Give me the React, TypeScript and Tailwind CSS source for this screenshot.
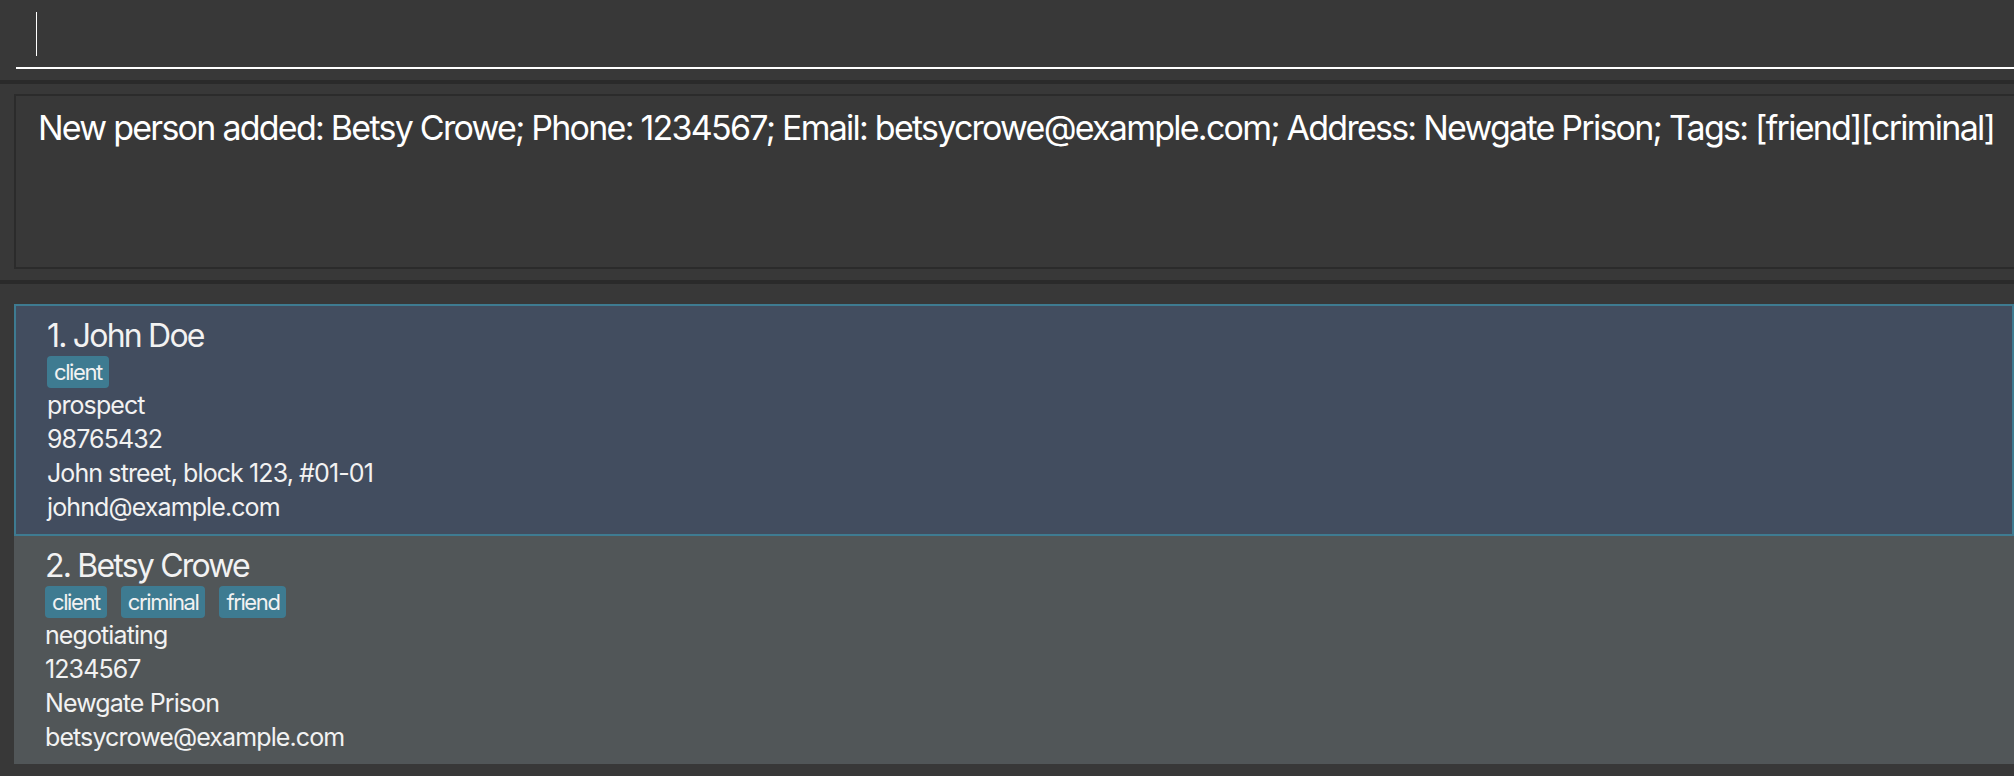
const people = [
  {
    name: "1. John Doe",
    tags: ["client"],
    status: "prospect",
    phone: "98765432",
    address: "John street, block 123, #01-01",
    email: "johnd@example.com",
    selected: true,
  },
  {
    name: "2. Betsy Crowe",
    tags: ["client", "criminal", "friend"],
    status: "negotiating",
    phone: "1234567",
    address: "Newgate Prison",
    email: "betsycrowe@example.com",
    selected: false,
  },
];

const message =
  "New person added: Betsy Crowe; Phone: 1234567; Email: betsycrowe@example.com; Address: Newgate Prison; Tags: [friend][criminal]";

function PersonCard({ person }: { person: (typeof people)[number] }) {
  return (
    <div
      className={
        person.selected
          ? "border-2 border-[#3e7b91] bg-[#424d5f] pl-[31px] pt-[10px] pb-[10px]"
          : "bg-[#515658] pl-[31px] pt-[10px] pb-[10px]"
      }
    >
      <div className="text-[32px] leading-[40px] tracking-[-1.8px] text-[#f2f2f2]">{person.name}</div>
      <div className="flex h-[32px] gap-[14px]">
        {person.tags.map((tag) => (
          <span
            key={tag}
            className="rounded-[4px] bg-[#3e7b91] px-[7px] text-[22px] leading-[32px] tracking-[-1.4px] text-[#f2f2f2]"
          >
            {tag}
          </span>
        ))}
      </div>
      <div className="text-[25px] leading-[34px] tracking-[-0.9px] text-[#f2f2f2]">
        <div>{person.status}</div>
        <div>{person.phone}</div>
        <div>{person.address}</div>
        <div>{person.email}</div>
      </div>
    </div>
  );
}

export default function App() {
  return (
    <div className="h-[776px] w-[2014px] overflow-hidden bg-[#383838] font-['Inter',sans-serif]">
      {/* command box */}
      <div className="h-[80px] pl-[16px] pt-[12px]">
        <div className="h-[57px] border-b-2 border-white pl-[20px]">
          <div className="h-[44px] w-px bg-white" />
        </div>
      </div>

      {/* result display */}
      <div className="h-[200px] border-t-4 border-[#2a2a2a] pl-[14px] pt-[10px]">
        <div className="h-[175px] border-2 border-r-0 border-[#2b2b2b] pl-[22px] pt-[10px]">
          <p className="whitespace-nowrap text-[34px] leading-[44px] tracking-[-1.75px] text-white">{message}</p>
        </div>
      </div>

      {/* person list */}
      <div className="border-t-4 border-[#2a2a2a] pl-[14px] pt-[20px]">
        {people.map((p) => (
          <PersonCard key={p.name} person={p} />
        ))}
      </div>
    </div>
  );
}
